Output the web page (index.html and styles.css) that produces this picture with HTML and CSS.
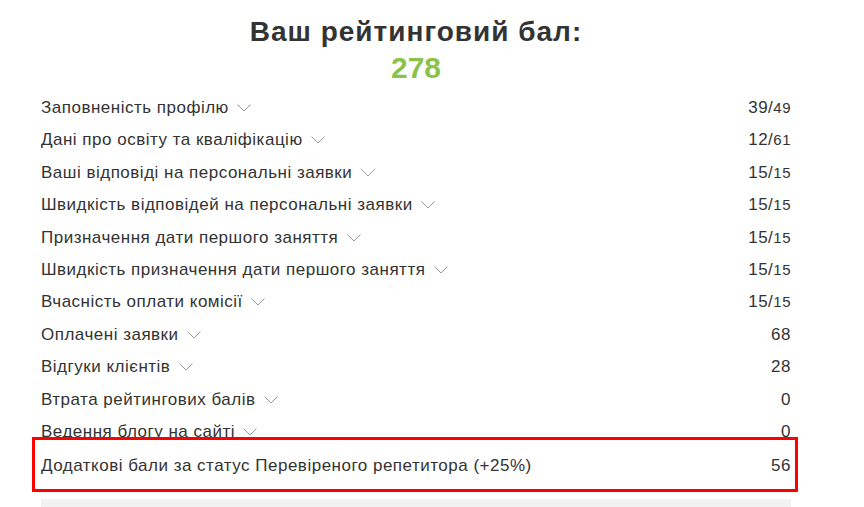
FILE: index.html
```html
<!DOCTYPE html>
<html lang="uk">
<head>
<meta charset="utf-8">
<link rel="stylesheet" href="styles.css">
</head>
<body>
<div class="rating">
  <h2 class="rating-title">Ваш рейтинговий бал:</h2>
  <div class="rating-total">278</div>
  <ul class="rating-list">
    <li class="row"><span class="label">Заповненість профілю <svg class="chev" viewBox="0 0 14 8"><polyline points="0.5,0.5 7,7 13.5,0.5"/></svg></span><span class="val">39/<small>49</small></span></li>
    <li class="row"><span class="label">Дані про освіту та кваліфікацію <svg class="chev" viewBox="0 0 14 8"><polyline points="0.5,0.5 7,7 13.5,0.5"/></svg></span><span class="val">12/<small>61</small></span></li>
    <li class="row"><span class="label">Ваші відповіді на персональні заявки <svg class="chev" viewBox="0 0 14 8"><polyline points="0.5,0.5 7,7 13.5,0.5"/></svg></span><span class="val">15/<small>15</small></span></li>
    <li class="row"><span class="label">Швидкість відповідей на персональні заявки <svg class="chev" viewBox="0 0 14 8"><polyline points="0.5,0.5 7,7 13.5,0.5"/></svg></span><span class="val">15/<small>15</small></span></li>
    <li class="row"><span class="label">Призначення дати першого заняття <svg class="chev" viewBox="0 0 14 8"><polyline points="0.5,0.5 7,7 13.5,0.5"/></svg></span><span class="val">15/<small>15</small></span></li>
    <li class="row"><span class="label">Швидкість призначення дати першого заняття <svg class="chev" viewBox="0 0 14 8"><polyline points="0.5,0.5 7,7 13.5,0.5"/></svg></span><span class="val">15/<small>15</small></span></li>
    <li class="row"><span class="label">Вчасність оплати комісії <svg class="chev" viewBox="0 0 14 8"><polyline points="0.5,0.5 7,7 13.5,0.5"/></svg></span><span class="val">15/<small>15</small></span></li>
    <li class="row"><span class="label">Оплачені заявки <svg class="chev" viewBox="0 0 14 8"><polyline points="0.5,0.5 7,7 13.5,0.5"/></svg></span><span class="val">68</span></li>
    <li class="row"><span class="label">Відгуки клієнтів <svg class="chev" viewBox="0 0 14 8"><polyline points="0.5,0.5 7,7 13.5,0.5"/></svg></span><span class="val">28</span></li>
    <li class="row"><span class="label">Втрата рейтингових балів <svg class="chev" viewBox="0 0 14 8"><polyline points="0.5,0.5 7,7 13.5,0.5"/></svg></span><span class="val">0</span></li>
    <li class="row"><span class="label">Ведення блогу на сайті <svg class="chev" viewBox="0 0 14 8"><polyline points="0.5,0.5 7,7 13.5,0.5"/></svg></span><span class="val">0</span></li>
    <li class="row row-bonus"><span class="label">Додаткові бали за статус Перевіреного репетитора (+25%)</span><span class="val">56</span></li>
  </ul>
  <div class="rating-footer"></div>
</div>
</body>
</html>
```
FILE: styles.css
```css
html, body {
  margin: 0;
  padding: 0;
  background: #fff;
}
body {
  font-family: "Liberation Sans", Arial, sans-serif;
  color: #333;
}
.rating {
  width: 750px;
  margin-left: 41px;
  padding-top: 16px;
}
.rating-title {
  margin: 0;
  text-align: center;
  font-size: 28px;
  letter-spacing: 1px;
  line-height: 32px;
  font-weight: bold;
  color: #333;
}
.rating-total {
  margin-top: 2px;
  text-align: center;
  font-size: 30px;
  line-height: 36px;
  font-weight: bold;
  color: #8bc34a;
}
.rating-list {
  list-style: none;
  margin: 6px 0 0 0;
  padding: 0;
}
.row {
  display: flex;
  justify-content: space-between;
  align-items: baseline;
  font-size: 17px;
  letter-spacing: 0.5px;
  line-height: 20.4px;
  padding: 6px 0;
}
.chev {
  width: 14px;
  height: 8px;
  margin-left: 3px;
  vertical-align: 1px;
  fill: none;
  stroke: #999;
  stroke-width: 1;
}
.val small {
  font-size: 15px;
}
.row-bonus {
  position: relative;
  margin-top: 2px;
}
.row-bonus::after {
  content: "";
  position: absolute;
  left: -9px;
  right: -7px;
  top: -13px;
  bottom: -9px;
  border: 3px solid #f00;
}
.rating-footer {
  margin-top: 16px;
  height: 10px;
  background: #f2f2f2;
}
```
